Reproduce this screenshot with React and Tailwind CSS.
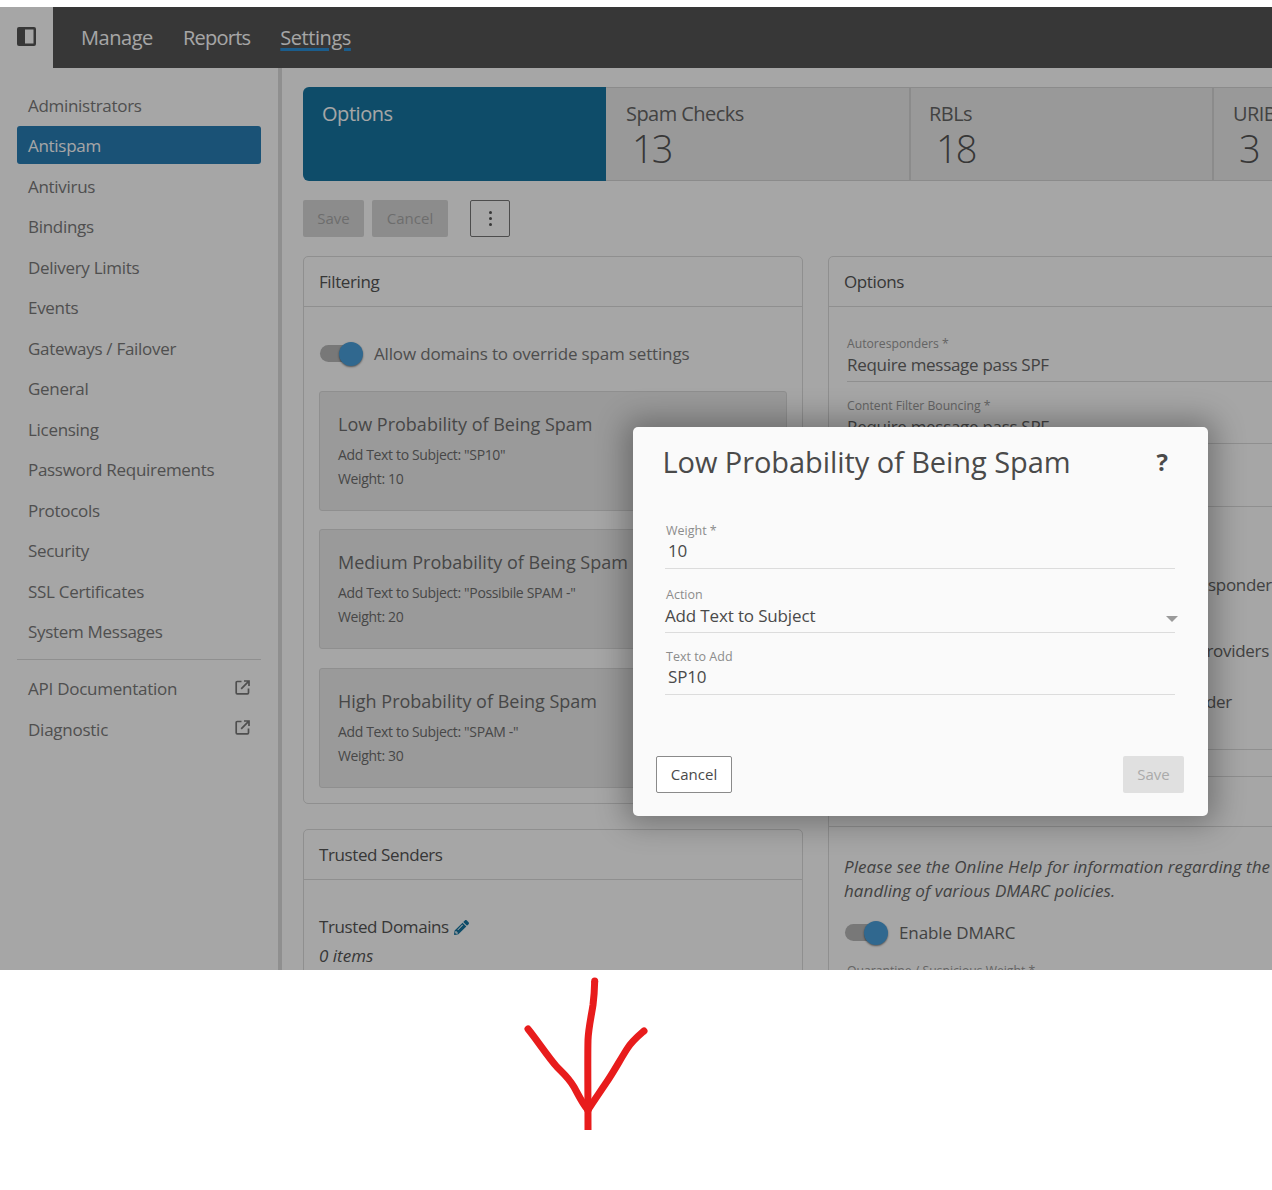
import React from "react";
import { FaPencilAlt } from "react-icons/fa";

const items = ["Administrators","Antispam","Antivirus","Bindings","Delivery Limits","Events","Gateways / Failover","General","Licensing","Password Requirements","Protocols","Security","SSL Certificates","System Messages"];

function Ext() {
  return (
    <svg viewBox="0 0 15 15" className="w-[15px] h-[15px] text-[#7a7a7a]" fill="none" stroke="currentColor" strokeWidth="1.7">
      <path d="M6.5 1.5H2.2a1 1 0 0 0-1 1v10.3a1 1 0 0 0 1 1h10.3a1 1 0 0 0 1-1V8.5" />
      <path d="M9 1h5v5M13.6 1.4 6.2 8.8" />
    </svg>
  );
}

function Toggle() {
  return (
    <div className="relative w-[43px] h-[24px] shrink-0">
      <div className="absolute left-0 top-[3px] w-[36px] h-[17px] rounded-full bg-[#b8b8b8]" />
      <div className="absolute right-0 top-0 w-[24px] h-[24px] rounded-full bg-[#4aa0dc] shadow-[0_1px_2px_rgba(0,0,0,0.5)]" />
    </div>
  );
}

function Panel({ title, className, children }) {
  return (
    <div className={"border border-[#dcdcdc] rounded-[5px] " + className}>
      <div className="h-[50px] border-b border-[#dcdcdc] flex items-center pl-[15px] text-[17px] tracking-[-0.4px] text-[#555]">{title}</div>
      {children}
    </div>
  );
}

function Card({ title, line, weight, className }) {
  return (
    <div className={"h-[120px] ml-[15px] mr-[15px] border border-[#dcdcdc] rounded-[3px] bg-[#ededed] pl-[18px] pt-[17px] " + className}>
      <div className="text-[18px] leading-[30px] text-[#6e6e6e] whitespace-nowrap">{title}</div>
      <div className="text-[14px] leading-[24px] tracking-[-0.35px] mt-[4px] text-[#6e6e6e] whitespace-nowrap">{line}</div>
      <div className="text-[14px] leading-[24px] tracking-[-0.35px] text-[#6e6e6e]">{weight}</div>
    </div>
  );
}

function Tab({ label, n, active, className, numClass }) {
  if (active) {
    return (
      <div className="w-[303px] shrink-0 bg-[#1676a2] rounded-l-[6px] pl-[19px] pt-[12px] text-[20px] leading-[30px] tracking-[-0.45px] text-white">{label}</div>
    );
  }
  return (
    <div className={"shrink-0 bg-[#ececec] border-y border-r-2 border-[#d6d6d6] pt-[11px] text-[#666] " + className}>
      <div className="text-[20px] leading-[30px] tracking-[-0.55px] whitespace-nowrap">{label}</div>
      <div className={"text-[38px] leading-[38px] tracking-[-2px] font-light text-[#555] " + numClass}>{n}</div>
    </div>
  );
}

function Field({ label, value, className }) {
  return (
    <div className={"ml-[18px] mr-[-200px] border-b border-[#dcdcdc] " + className}>
      <div className="text-[12.2px] leading-[16px] text-[#9a9a9a] whitespace-nowrap">{label}</div>
      <div className="text-[17px] leading-[26px] tracking-[-0.3px] text-[#666] whitespace-nowrap">{value}</div>
    </div>
  );
}

function ModalField({ label, value, valueClass, className, children }) {
  return (
    <div className={"relative ml-[32px] mr-[33px] border-b border-[#dcdcdc] " + className}>
      <div className="text-[12.5px] leading-[16px] text-[#8c8c8c] pl-px whitespace-nowrap">{label}</div>
      <div className={"text-[17px] tracking-[-0.15px] text-[#4a4a4a] whitespace-nowrap " + valueClass}>{value}</div>
      {children}
    </div>
  );
}

export default function App() {
  return (
    <div className="w-[1272px] h-[1190px] bg-white overflow-hidden pt-[7px] font-['Open_Sans',sans-serif]">
      <div className="relative h-[963px] overflow-hidden bg-white flex flex-col">
        <div className="h-[61px] shrink-0 flex">
          <div className="w-[53px] flex items-center pl-[17px] pb-[3px]">
            <svg viewBox="0 0 19 19" className="w-[19px] h-[19px]">
              <rect x="0" y="0" width="19" height="19" rx="2" fill="#555" />
              <rect x="8" y="2.5" width="8.5" height="14" fill="#fff" />
            </svg>
          </div>
          <div className="flex-1 bg-[#555] flex items-center pl-[28px] gap-[30px] text-[20px] text-white">
            <span className="tracking-[-0.45px]">Manage</span>
            <span className="tracking-[-0.75px]">Reports</span>
            <span className="tracking-[-0.45px] underline decoration-[#2a8fd8] decoration-[3px] underline-offset-[3px]">Settings</span>
          </div>
        </div>

        <div className="flex flex-1 min-h-0">
          <div className="w-[278px] shrink-0 pl-[17px] pr-[17px] pt-[17.9px]">
            {items.map((t) => (
              <div
                key={t}
                className={
                  "h-[38px] mb-[2.5px] pl-[11px] pt-[1px] flex items-center text-[17px] tracking-[-0.3px] rounded-[3px] whitespace-nowrap " +
                  (t === "Antispam" ? "bg-[#287eb6] text-white" : "text-[#7a7a7a]")
                }
              >
                {t}
              </div>
            ))}
            <div className="border-t border-[#dcdcdc] mt-[8.5px] mb-[9.5px]" />
            {["API Documentation", "Diagnostic"].map((t) => (
              <div key={t} className="h-[38px] mb-[2.5px] pl-[11px] pr-[11px] pt-[1px] flex items-center justify-between text-[17px] tracking-[-0.25px] text-[#7a7a7a]">
                {t}
                <span className="pb-[3px]"><Ext /></span>
              </div>
            ))}
          </div>
          <div className="w-[4px] shrink-0 bg-[#dcdcdc]" />
          <div className="flex-1 min-w-0 pl-[21px] pt-[19px]">
            <div className="flex h-[94px] w-[1300px]">
              <Tab label="Options" active />
              <Tab label="Spam Checks" n="13" className="w-[305px] pl-[20px]" numClass="pl-[6px]" />
              <Tab label="RBLs" n="18" className="w-[303px] pl-[18px]" numClass="pl-[7px]" />
              <Tab label="URIBL" n="3" className="w-[304px] pl-[19px]" numClass="pl-[6px]" />
            </div>
            <div className="flex mt-[19px] h-[37px] text-[15px]">
              <div className="w-[61px] bg-[#d8d8d8] rounded-[2px] flex items-center justify-center text-[#a8a8a8]">Save</div>
              <div className="w-[76px] ml-[8px] bg-[#d8d8d8] rounded-[2px] flex items-center justify-center text-[#a8a8a8]">Cancel</div>
              <div className="w-[40px] ml-[22px] border border-[#777] rounded-[2px] flex flex-col items-center justify-center gap-[3px]">
                <span className="w-[3px] h-[3px] rounded-full bg-[#555]" />
                <span className="w-[3px] h-[3px] rounded-full bg-[#555]" />
                <span className="w-[3px] h-[3px] rounded-full bg-[#555]" />
              </div>
            </div>
            <div className="flex gap-[25px] mt-[19px] w-[1100px] items-start">
              <div className="w-[500px] shrink-0">
                <Panel title="Filtering" className="h-[548px]">
                  <div className="flex items-center gap-[11px] ml-[16px] mt-[35px] h-[24px] text-[17px] tracking-[-0.16px] text-[#777]">
                    <Toggle />
                    Allow domains to override spam settings
                  </div>
                  <Card title="Low Probability of Being Spam" line={'Add Text to Subject: "SP10"'} weight="Weight: 10" className="mt-[25px]" />
                  <Card title="Medium Probability of Being Spam" line={'Add Text to Subject: "Possibile SPAM -"'} weight="Weight: 20" className="mt-[18px]" />
                  <Card title="High Probability of Being Spam" line={'Add Text to Subject: "SPAM -"'} weight="Weight: 30" className="mt-[19px]" />
                </Panel>
                <Panel title="Trusted Senders" className="mt-[25px] h-[300px]">
                  <div className="pl-[15px] pt-[34px] text-[17px] text-[#555]">
                    <div className="flex items-center gap-[5px] leading-[26px] tracking-[-0.4px]">
                      Trusted Domains
                      <FaPencilAlt className="w-[15px] h-[15px] text-[#1676a2]" />
                    </div>
                    <div className="italic leading-[28px] mt-[2px]">0 items</div>
                  </div>
                </Panel>
              </div>
              <div className="w-[500px] shrink-0">
                <Panel title="Options" className="h-[494px]">
                  <Field label="Autoresponders *" value="Require message pass SPF" className="mt-[29px] h-[46px]" />
                  <Field label="Content Filter Bouncing *" value="Require message pass SPF" className="mt-[16px] h-[46px]" />
                  <Field label="Forwarding *" value="Require message pass SPF" className="mt-[17px] h-[46px]" />
                  <div className="mt-[65px] flex justify-end pr-[55px] text-[17px] leading-[26px] tracking-[-0.3px] text-[#666] whitespace-nowrap">Skip filtering for autoresponder</div>
                  <div className="mt-[40px] flex justify-end pr-[58px] text-[17px] leading-[26px] tracking-[-0.3px] text-[#666] whitespace-nowrap">Allow trusted email providers</div>
                  <div className="mt-[25px] flex justify-end pr-[95px] text-[17px] leading-[26px] tracking-[-0.3px] text-[#666] whitespace-nowrap">Require valid sender</div>
                </Panel>
                <Panel title="DMARC" className="mt-[26px] h-[300px]">
                  <div className="pl-[15px] pt-[28px] pr-[10px] text-[17px] leading-[24px] tracking-[0.07px] italic text-[#666] w-[470px]">
                    Please see the Online Help for information regarding the handling of various DMARC policies.
                  </div>
                  <div className="flex items-center gap-[11px] ml-[16px] mt-[18px] h-[24px] text-[17px] tracking-[-0.1px] text-[#666]">
                    <Toggle />
                    Enable DMARC
                  </div>
                  <div className="ml-[18px] mt-[18px] text-[12.2px] leading-[16px] text-[#9a9a9a]">Quarantine / Suspicious Weight *</div>
                </Panel>
              </div>
            </div>
          </div>
        </div>

        <div className="absolute inset-0 bg-black/35" />

        <div className="absolute left-[633px] top-[420px] w-[575px] h-[389px] bg-[#fafafa] rounded-[5px] shadow-[0_0_30px_8px_rgba(0,0,0,0.3)]">
          <div className="flex justify-between pl-[29.5px] pr-[40px] pt-[15px]">
            <div className="text-[29px] leading-[40px] tracking-[-0.07px] text-[#4a4a4a] whitespace-nowrap">Low Probability of Being Spam</div>
            <div className="text-[24px] leading-[40px] font-bold text-[#4a4a4a]">?</div>
          </div>
          <ModalField label="Weight *" value="10" valueClass="pl-[3px] leading-[24px]" className="mt-[41px] h-[46px]" />
          <ModalField label="Action" value="Add Text to Subject" valueClass="leading-[26px]" className="mt-[18px] h-[46px]">
            <svg viewBox="0 0 12 6" className="absolute right-[-3px] bottom-[10px] w-[12px] h-[6px]"><path d="M0 0h12L6 6z" fill="#9a9a9a" /></svg>
          </ModalField>
          <ModalField label="Text to Add" value="SP10" valueClass="pl-[3px] leading-[24px]" className="mt-[16px] h-[46px]" />
          <div className="absolute left-[23px] right-[24px] bottom-[23px] flex justify-between text-[15px] h-[37px]">
            <div className="w-[76px] border border-[#8a8a8a] rounded-[2px] bg-white flex items-center justify-center text-[#4a4a4a]">Cancel</div>
            <div className="w-[61px] bg-[#e0e0e0] rounded-[2px] flex items-center justify-center text-[#aaa]">Save</div>
          </div>
        </div>
      </div>

      <svg viewBox="0 970 1272 220" className="block w-[1272px] h-[220px]" fill="none" stroke="#e81c1c" strokeWidth="7" strokeLinecap="round" strokeLinejoin="round">
        <path d="M594.7 981 C594.5 990 594 997 593 1005 C591 1018 588.5 1028 588 1040 C587.5 1060 588 1090 588 1130" strokeLinecap="butt" />
        <path d="M594.7 981 L594.7 981" />
        <path d="M528 1029 C537 1040 548 1057 557 1067 C564 1074 569 1078 574 1087 C578 1094 582 1103 588 1110" />
        <path d="M644 1031 C637 1037 632 1041 627 1049 C620 1060 613 1073 606 1083 C600 1092 593 1102 588 1110" />
      </svg>
    </div>
  );
}
